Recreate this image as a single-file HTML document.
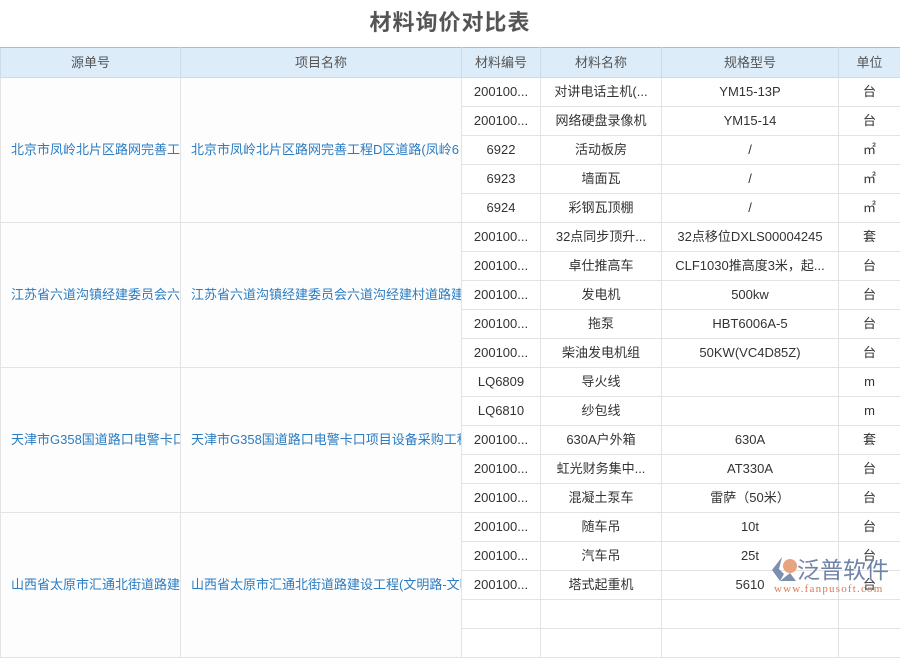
<!DOCTYPE html>
<html><head><meta charset="utf-8"><style>
body{margin:0;width:900px;height:600px;overflow:hidden;background:#fff;font-family:"Liberation Sans","Noto Sans CJK SC",sans-serif;}
h1{position:absolute;top:8px;left:0;width:900px;margin:0;text-align:center;font-size:22px;line-height:30px;font-weight:bold;color:#555;letter-spacing:1px}
table{position:absolute;top:47px;left:0;border-collapse:collapse;table-layout:fixed;width:901px}
td,th{border:1px solid #e3e3e3;height:28px;line-height:28px;padding:0;font-size:13px;color:#333;text-align:center;white-space:nowrap;overflow:hidden;font-weight:normal;vertical-align:middle}
th{background:#dcecf9;color:#555;border-color:#c9dcec;height:29px}
tr.h th{border-top:1px solid #9cc0dc}
td.b,td.b2{color:#2b7cc0;text-align:left;padding-left:10px;background:#fdfdfe;text-overflow:clip}
.logo{position:absolute;left:770px;top:550px;}
</style></head><body>
<h1>材料询价对比表</h1>
<table>
<colgroup><col style="width:180px"><col style="width:281px"><col style="width:79px"><col style="width:121px"><col style="width:177px"><col style="width:62px"></colgroup>
<tr class="h"><th>源单号</th><th>项目名称</th><th>材料编号</th><th>材料名称</th><th>规格型号</th><th>单位</th></tr>
<tr><td class="b" rowspan="5">北京市凤岭北片区路网完善工程</td><td class="b2" rowspan="5">北京市凤岭北片区路网完善工程D区道路(凤岭6</td><td>200100...</td><td>对讲电话主机(...</td><td>YM15-13P</td><td>台</td></tr>
<tr><td>200100...</td><td>网络硬盘录像机</td><td>YM15-14</td><td>台</td></tr>
<tr><td>6922</td><td>活动板房</td><td>/</td><td>㎡</td></tr>
<tr><td>6923</td><td>墙面瓦</td><td>/</td><td>㎡</td></tr>
<tr><td>6924</td><td>彩钢瓦顶棚</td><td>/</td><td>㎡</td></tr>
<tr><td class="b" rowspan="5">江苏省六道沟镇经建委员会六道</td><td class="b2" rowspan="5">江苏省六道沟镇经建委员会六道沟经建村道路建设</td><td>200100...</td><td>32点同步顶升...</td><td>32点移位DXLS00004245</td><td>套</td></tr>
<tr><td>200100...</td><td>卓仕推高车</td><td>CLF1030推高度3米，起...</td><td>台</td></tr>
<tr><td>200100...</td><td>发电机</td><td>500kw</td><td>台</td></tr>
<tr><td>200100...</td><td>拖泵</td><td>HBT6006A-5</td><td>台</td></tr>
<tr><td>200100...</td><td>柴油发电机组</td><td>50KW(VC4D85Z)</td><td>台</td></tr>
<tr><td class="b" rowspan="5">天津市G358国道路口电警卡口</td><td class="b2" rowspan="5">天津市G358国道路口电警卡口项目设备采购工程</td><td>LQ6809</td><td>导火线</td><td></td><td>m</td></tr>
<tr><td>LQ6810</td><td>纱包线</td><td></td><td>m</td></tr>
<tr><td>200100...</td><td>630A户外箱</td><td>630A</td><td>套</td></tr>
<tr><td>200100...</td><td>虹光财务集中...</td><td>AT330A</td><td>台</td></tr>
<tr><td>200100...</td><td>混凝土泵车</td><td>雷萨（50米）</td><td>台</td></tr>
<tr><td class="b" rowspan="5">山西省太原市汇通北街道路建设</td><td class="b2" rowspan="5">山西省太原市汇通北街道路建设工程(文明路-文明</td><td>200100...</td><td>随车吊</td><td>10t</td><td>台</td></tr>
<tr><td>200100...</td><td>汽车吊</td><td>25t</td><td>台</td></tr>
<tr><td>200100...</td><td>塔式起重机</td><td>5610</td><td>台</td></tr>
<tr><td></td><td></td><td></td><td></td></tr>
<tr><td></td><td></td><td></td><td></td></tr>
</table>
<div class="logo">
<svg width="30" height="30" viewBox="0 0 30 30" style="position:absolute;left:0px;top:4px"><path d="M12 3 L2 16 L10 27 L14 20 L9 15 Z" fill="#7d8fae"/><circle cx="20" cy="12" r="7" fill="#e8a47f"/><path d="M10 27 L26 27 L20 19 Z" fill="#7d8fae"/></svg>
<div style="position:absolute;left:27px;top:2px;font-size:23px;line-height:32px;color:#6f83a8;white-space:nowrap;font-family:'Noto Sans CJK SC',sans-serif;letter-spacing:0px">泛普软件</div>
<div style="position:absolute;left:4px;top:33px;font-size:11px;color:#e07850;white-space:nowrap;font-family:'Liberation Serif',serif;letter-spacing:1.2px">www.fanpusoft.com</div>
</div>
</body></html>
